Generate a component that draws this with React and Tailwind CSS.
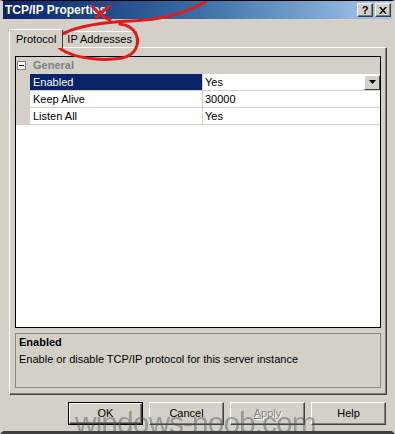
import { useState } from 'react';

const rows = [
  { name: 'Enabled', value: 'Yes', selected: true },
  { name: 'Keep Alive', value: '30000' },
  { name: 'Listen All', value: 'Yes' },
];

function TitleButton({ children }) {
  return (
    <span className="flex h-[14px] w-[16px] items-center justify-center border border-t-white border-l-white border-r-[#404040] border-b-[#404040] bg-[#d4d0c8] text-[11px] font-bold leading-none text-black shadow-[inset_-1px_-1px_#808080]">
      {children}
    </span>
  );
}

function DialogButton({ label, isDefault, disabled, mnemonic }) {
  const text = mnemonic ? (
    <>
      <span className="underline">{label[0]}</span>
      {label.slice(1)}
    </>
  ) : (
    label
  );
  return (
    <button
      className={`h-[23px] w-[75px] bg-[#d4d0c8] text-[11px] ${
        isDefault ? 'border border-black' : ''
      }`}
    >
      <span
        className={`flex h-full w-full items-center justify-center border border-t-white border-l-white border-r-[#404040] border-b-[#404040] shadow-[inset_-1px_-1px_#808080] ${
          disabled ? 'text-[#808080] [text-shadow:1px_1px_#ffffff]' : 'text-black'
        }`}
      >
        {text}
      </span>
    </button>
  );
}

export default function App() {
  const [selected] = useState(0);

  return (
    <div
      className="relative h-[434px] w-[395px] overflow-hidden border-x-[3px] border-b-[3px] border-t border-x-[#d4d0c8] border-b-[#404040] bg-[#d4d0c8] text-black"
      style={{ fontFamily: '"Liberation Sans", Arial, sans-serif' }}
    >
      {/* Title bar */}
      <div className="flex h-[18px] items-center justify-between bg-gradient-to-r from-[#0a246a] via-[#3a6ea5] to-[#a6caf0] pl-[2px] pr-[1px]">
        <span className="text-[12px] font-bold text-white">TCP/IP Properties</span>
        <div className="flex gap-[2px]">
          <TitleButton>?</TitleButton>
          <TitleButton>
            <svg width="8" height="7" viewBox="0 0 8 7">
              <path d="M0 0h2l2 2.5L6 0h2L5 3.5 8 7H6L4 4.5 2 7H0l3-3.5z" fill="#000" />
            </svg>
          </TitleButton>
        </div>
      </div>

      {/* Tabs */}
      <div className="ml-[6px] mt-[10px] flex items-end">
        <div className="relative z-10 -mb-px flex h-[19px] items-center border-l border-t border-r border-t-white border-l-white border-r-[#404040] bg-[#d4d0c8] px-[6px] text-[11px]">
          Protocol
        </div>
        <div className="flex h-[16px] items-center border-t border-r border-t-white border-r-[#404040] px-[4px] text-[11px]">
          IP Addresses
        </div>
      </div>

      {/* Tab panel */}
      <div className="ml-[6px] mr-[5px] flex h-[348px] flex-col border border-t-white border-l-white border-r-[#404040] border-b-[#404040] px-[5px] pt-[8px] shadow-[inset_-1px_-1px_#808080]">
        {/* Property grid */}
        <div className="flex h-[272px] flex-col border border-black bg-white">
          <div className="flex h-[17px] items-center border-b border-[#d4d0c8] bg-[#d4d0c8]">
            <span className="ml-[1px] flex h-[9px] w-[9px] items-center justify-center border border-[#808080] bg-white">
              <span className="h-px w-[5px] bg-black" />
            </span>
            <span className="ml-[7px] text-[11px] font-bold text-[#808080]">General</span>
          </div>
          {rows.map((row, i) => (
            <div key={row.name} className="flex h-[17px]">
              <div className="w-[14px] bg-[#d4d0c8]" />
              <div
                className={`flex w-[173px] items-center border-b border-r border-[#d4d0c8] pl-[3px] text-[11px] ${
                  i === selected ? 'bg-[#0a246a] text-white' : ''
                }`}
              >
                {row.name}
              </div>
              <div className="flex flex-1 items-center justify-between border-b border-[#d4d0c8] pl-[2px] text-[11px]">
                <span>{row.value}</span>
                {i === selected && (
                  <span className="flex h-[15px] w-[16px] items-center justify-center border border-t-white border-l-white border-r-[#404040] border-b-[#404040] bg-[#d4d0c8]">
                    <svg width="7" height="4" viewBox="0 0 7 4">
                      <path d="M0 0h7L3.5 4z" fill="#000" />
                    </svg>
                  </span>
                )}
              </div>
            </div>
          ))}
        </div>

        {/* Description */}
        <div className="mt-[5px] h-[55px] border border-[#8c8a85] px-[3px] text-[11px]">
          <div className="font-bold">Enabled</div>
          <div>Enable or disable TCP/IP protocol for this server instance</div>
        </div>
      </div>

      {/* Buttons */}
      <div className="mt-[7px] flex justify-end gap-[6px] pr-[6px]">
        <DialogButton label="OK" isDefault />
        <DialogButton label="Cancel" />
        <DialogButton label="Apply" disabled mnemonic />
        <DialogButton label="Help" />
      </div>

      {/* Watermark */}
      <span className="pointer-events-none absolute left-[72px] top-[407px] text-[30px] leading-none tracking-[-1px] text-[#555] opacity-45">
        windows-noob.com
      </span>

      {/* Red annotation */}
      <svg
        className="pointer-events-none absolute left-[-3px] top-[-1px]"
        width="395"
        height="434"
        viewBox="0 0 395 434"
        fill="none"
      >
        <path
          d="M205 2 C185 14 160 20 130 21 C105 22 80 26 64 33 C53 38 55 47 66 52 C80 59 105 61 122 58 C136 55 140 44 136 34 C133 28 128 25 120 24"
          stroke="#e01b1b"
          strokeWidth="3"
          strokeLinecap="round"
        />
        <path
          d="M92 6 C97 12 102 17 110 20 M96 18 C100 14 104 10 110 6 M55 34 C58 33 62 33 66 33"
          stroke="#e01b1b"
          strokeWidth="3"
          strokeLinecap="round"
        />
      </svg>
    </div>
  );
}
